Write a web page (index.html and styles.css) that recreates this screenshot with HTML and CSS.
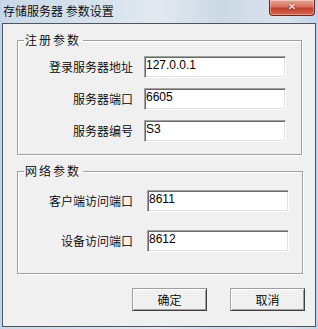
FILE: index.html
```html
<!DOCTYPE html>
<html>
<head>
<meta charset="utf-8">
<title>存储服务器 参数设置</title>
<link rel="stylesheet" href="styles.css">
</head>
<body>
<div class="window">
  <div class="titlebar">
    <span class="caption">存储服务器 参数设置</span>
    <span class="closeBtn">&#x2715;</span>
  </div>
  <div class="client">
    <fieldset class="group grpReg">
      <legend>注册参数</legend>
      <div class="rows">
        <label>登录服务器地址</label><input type="text" value="127.0.0.1">
        <label>服务器端口</label><input type="text" value="6605">
        <label>服务器编号</label><input type="text" value="S3">
      </div>
    </fieldset>
    <fieldset class="group grpNet">
      <legend>网络参数</legend>
      <div class="rows">
        <label>客户端访问端口</label><input type="text" value="8611">
        <label>设备访问端口</label><input type="text" value="8612">
      </div>
    </fieldset>
    <div class="btnBar">
      <button class="btn">确定</button>
      <button class="btn">取消</button>
    </div>
  </div>
</div>
</body>
</html>
```

FILE: styles.css
```css
html, body {
	margin:0;
	padding:0;
}

body {
	font-family: "Noto Sans CJK SC DemiLight", "Noto Sans CJK SC", "Liberation Sans", sans-serif;
	font-size:12px;
	font-weight:300;
	color:#000;
}

.window {
	width:318px;
	height:329px;
	display:flex;
	flex-direction:column;
	background:linear-gradient(to right, #bcd3ea 0px, #c9d9e9 3px, #d6e1ec 30%, #e2e9f0 50%, #cbd8e5 70%, #d9e3ed 90%, #bfd4ea 100%);
}

.titlebar {
	height:23px;
	display:flex;
	align-items:flex-start;
}

.caption {
	padding-left:3px;
	padding-top:3px;
	line-height:15px;
	font-size:12px;
	font-weight:400;
}

.closeBtn {
	margin-left:auto;
	margin-right:3px;
	width:44px;
	height:15px;
	border:1px solid #6e2419;
	border-top:none;
	border-radius:0 0 4px 4px;
	background:linear-gradient(to bottom, #e9a593 0%, #d8705c 45%, #c2402c 55%, #d5674f 100%);
	box-shadow:inset 0 0 0 1px rgba(255,255,255,0.35);
	color:#fff;
	font-family:"DejaVu Sans", sans-serif;
	font-size:10px;
	font-weight:bold;
	text-align:center;
	line-height:14px;
	text-shadow:0 0 2px #5a1a10;
}

.client {
	flex:1;
	margin:0 2px 2px 2px;
	border:1px solid #4a5560;
	background:#f0f0f0;
	display:flex;
	flex-direction:column;
}

.group {
	margin:8px 13px 0 14px;
	padding:0;
	border:1px solid #a0a0a0;
	box-shadow:1px 1px 0 #fff, inset 1px 1px 0 #fff;
	min-width:0;
}

.group legend {
	margin-left:6px;
	padding:0 2px 0 1px;
	letter-spacing:2px;
	line-height:16px;
	font-size:12px;
}

.rows {
	display:grid;
	align-items:center;
}

.rows label {
	text-align:right;
	line-height:22px;
}

.grpReg .rows {
	grid-template-columns:115px 142px;
	column-gap:11px;
	row-gap:10px;
	padding:8px 0 12px 0;
}

.grpNet {
	margin-right:12px;
}

.grpNet .rows {
	grid-template-columns:115px 142px;
	column-gap:14px;
	row-gap:18px;
	padding:11px 0 21px 0;
}

.rows input {
	box-sizing:border-box;
	width:142px;
	height:22px;
	margin:0;
	padding:0 2px 4px 1px;
	border:1px solid;
	border-color:#a0a0a0 #fff #fff #a0a0a0;
	box-shadow:inset 1px 1px 0 #696969, inset -1px -1px 0 #e3e3e3;
	background:#fff;
	font-family:"Liberation Sans", Arial, sans-serif;
	font-size:12px;
	font-weight:400;
	color:#000;
	outline:none;
}

.btnBar {
	display:flex;
	justify-content:flex-end;
	gap:23px;
	margin-top:14px;
	padding-right:10px;
}

.btn {
	box-sizing:border-box;
	width:75px;
	height:23px;
	margin:0;
	padding:0;
	border:1px solid;
	border-color:#a0a0a0 #404040 #404040 #a0a0a0;
	box-shadow:inset 1px 1px 0 #fff, inset -1px -1px 0 #a0a0a0;
	background:#f0f0f0;
	font-family:"Noto Sans CJK SC DemiLight", "Noto Sans CJK SC", sans-serif;
	font-size:12px;
	font-weight:300;
	color:#000;
}
```
